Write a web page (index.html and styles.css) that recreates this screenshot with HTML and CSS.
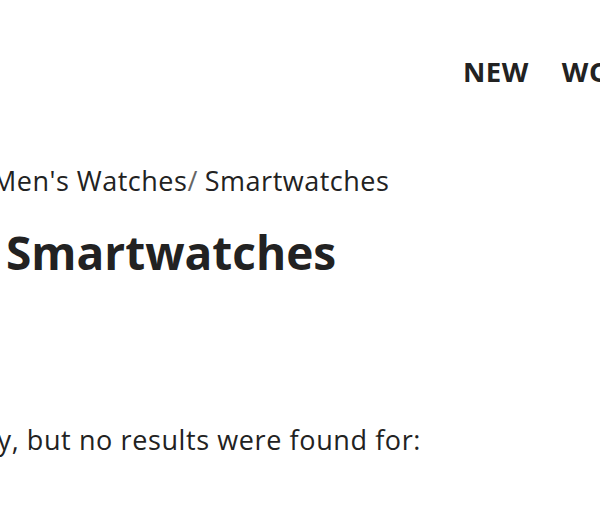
FILE: index.html
```html
<!DOCTYPE html>
<html lang="en">
<head>
<meta charset="utf-8">
<title>Smartwatches</title>
<link rel="stylesheet" href="styles.css">
</head>
<body>
<header class="site-header">
  <nav class="main-nav">
    <a class="nav-link" href="#">NEW</a>
    <a class="nav-link" href="#">WOMEN</a>
  </nav>
</header>
<main class="content">
  <ol class="breadcrumb">
    <li class="crumb"><a href="#">Men's Watches</a><span class="sep">/</span></li>
    <li class="crumb current">Smartwatches</li>
  </ol>
  <h1 class="page-title">Smartwatches</h1>
  <p class="no-results">Sorry, but no results were found for:</p>
</main>
</body>
</html>
```
FILE: styles.css
```css
html, body {
  margin: 0;
  padding: 0;
  background: #fff;
  overflow: hidden;
}
body {
  width: 600px;
  height: 530px;
  font-family: "Open Sans", Lato, sans-serif;
  color: #222;
}
.site-header {
  display: flex;
  padding: 54px 0 0 463px;
  height: 40px;
}
.main-nav {
  display: flex;
  gap: 33px;
  white-space: nowrap;
}
.nav-link {
  font-weight: 700;
  font-size: 27.5px;
  letter-spacing: 0.5px;
  color: #222;
  text-decoration: none;
  line-height: 36px;
}
.content {
  margin-left: -4px;
  padding-top: 69px;
}
.breadcrumb {
  list-style: none;
  margin: 0 0 0 -4px;
  padding: 0;
  display: flex;
  gap: 7px;
  font-size: 27px;
  letter-spacing: 0.5px;
  line-height: 36px;
  white-space: nowrap;
}
.crumb a {
  color: #222;
  text-decoration: none;
}
.sep {
  color: #666;
  margin-left: 0;
}
.page-title {
  margin: 25px 0 0 10px;
  font-size: 46px;
  font-weight: 700;
  line-height: 56px;
  white-space: nowrap;
}
.no-results {
  margin: 142px 0 0 -54px;
  font-size: 27px;
  letter-spacing: 0.6px;
  line-height: 36px;
  white-space: nowrap;
}
```
